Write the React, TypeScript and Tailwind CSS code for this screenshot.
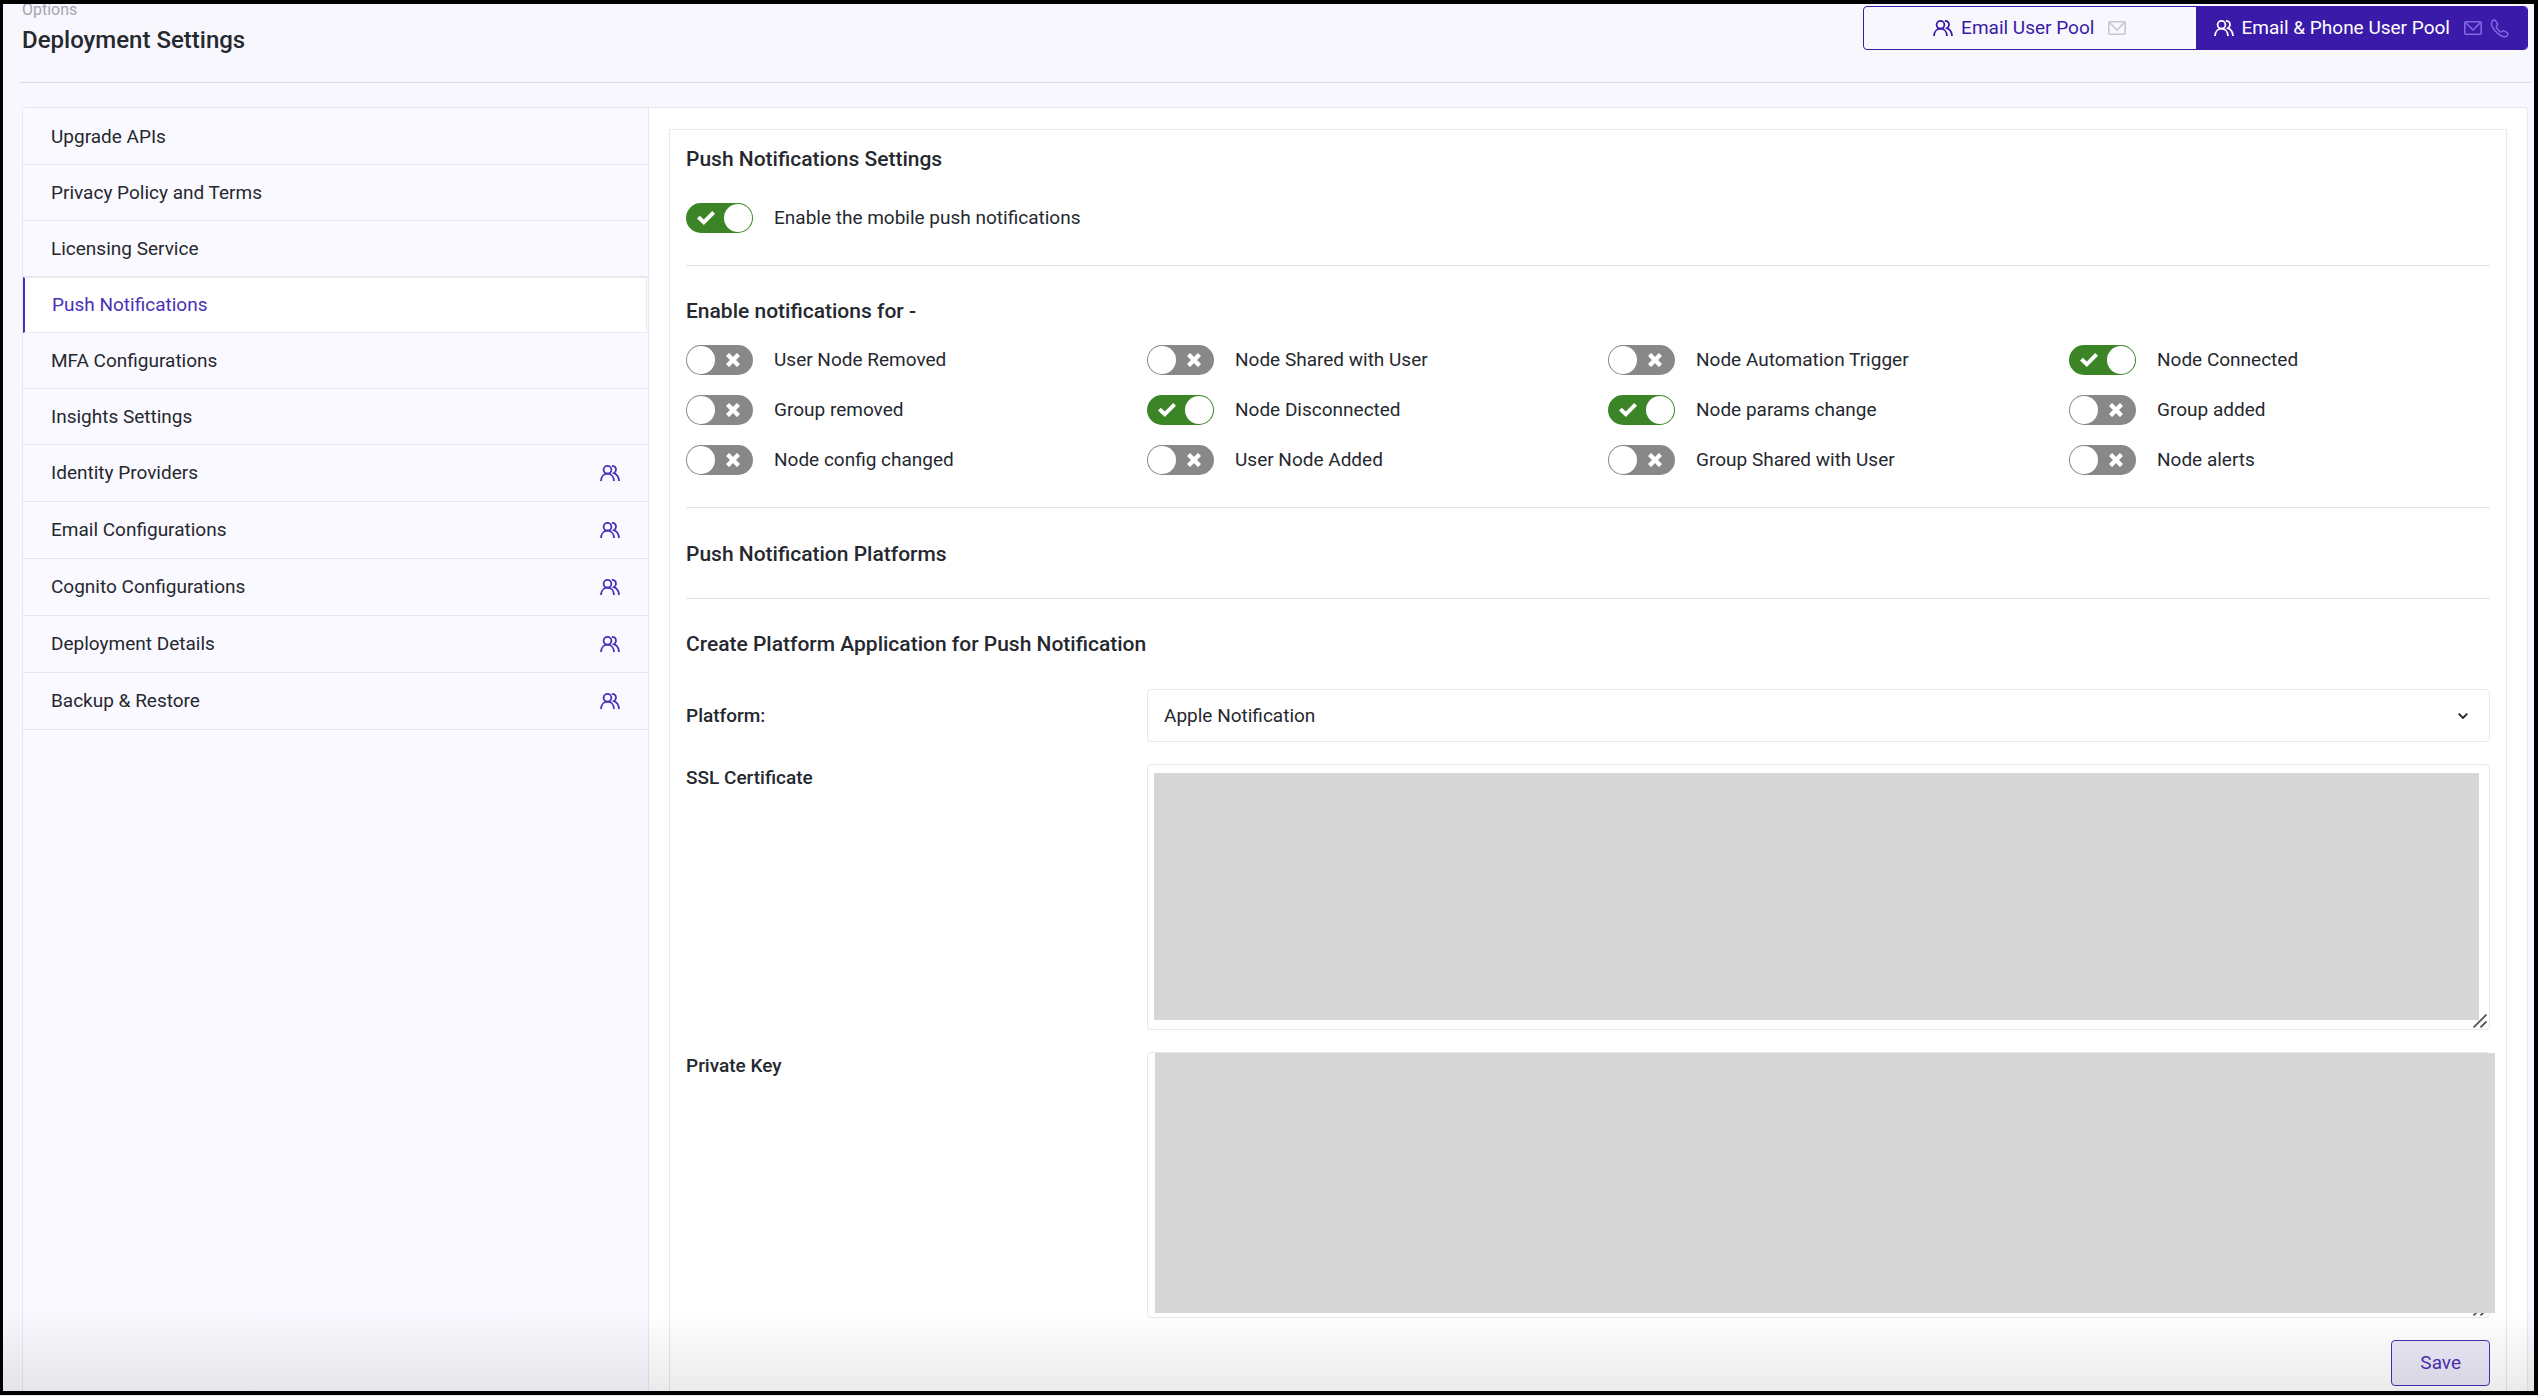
import { useState } from "react"

const menuItems = [
  { label: "Upgrade APIs", pool: false },
  { label: "Privacy Policy and Terms", pool: false },
  { label: "Licensing Service", pool: false },
  { label: "Push Notifications", pool: false },
  { label: "MFA Configurations", pool: false },
  { label: "Insights Settings", pool: false },
  { label: "Identity Providers", pool: true },
  { label: "Email Configurations", pool: true },
  { label: "Cognito Configurations", pool: true },
  { label: "Deployment Details", pool: true },
  { label: "Backup & Restore", pool: true },
]

const notificationTypes = [
  { label: "User Node Removed", on: false },
  { label: "Node Shared with User", on: false },
  { label: "Node Automation Trigger", on: false },
  { label: "Node Connected", on: true },
  { label: "Group removed", on: false },
  { label: "Node Disconnected", on: true },
  { label: "Node params change", on: true },
  { label: "Group added", on: false },
  { label: "Node config changed", on: false },
  { label: "User Node Added", on: false },
  { label: "Group Shared with User", on: false },
  { label: "Node alerts", on: false },
]

function UsersIcon({ className = "" }) {
  return (
    <svg viewBox="0 0 20 16" fill="none" stroke="currentColor" strokeWidth="1.8" className={`h-4 w-5 ${className}`}>
      <circle cx="7.5" cy="4.8" r="3.9" />
      <path d="M1 16c.2-4.300 2.800-7.300 6.500-7.300s6.300 3 6.500 7.300" />
      <path d="M11.800.900c2.600 0 4.200 1.700 4.200 3.900 0 1.500-.800 2.700-2.200 3.400 3.200 1.200 5 3.800 5.200 7.800" />
    </svg>
  )
}

function MailIcon({ className = "" }) {
  return (
    <svg viewBox="0 0 18 14" fill="none" stroke="currentColor" strokeWidth="1.6" strokeLinejoin="round" className={`ml-1.5 h-3.5 w-[18px] ${className}`}>
      <rect x=".8" y=".8" width="16.4" height="12.4" rx="1" />
      <path d="M1.500 1.500 9 9l7.500-7.500" />
    </svg>
  )
}

function PhoneIcon({ className = "" }) {
  return (
    <svg viewBox="0 0 20 20" fill="none" stroke="currentColor" strokeWidth="1.6" strokeLinejoin="round" className={`size-[19px] ${className}`}>
      <path d="M2.500 2.200c1-1.200 2.600-1.400 3.400-.3l1.900 2.900c.5.9.2 1.700-.7 2.500-.8.7-.6 1.400.2 2.600 1 1.500 2 2.600 3.300 3.400 1 .6 1.700.6 2.300-.1.7-.9 1.600-1.100 2.500-.5l2.700 1.900c1 .8.8 2.200-.3 3.200-1.800 1.500-4.500 1-7.600-1.100C6.500 14.200 3.600 10.900 2 7.300 1.200 5.300 1.300 3.600 2.500 2.200z" />
    </svg>
  )
}

function ResizeHandle() {
  return (
    <svg
      viewBox="0 0 14 14"
      className="pointer-events-none absolute right-[3px] bottom-0.5 size-3.5"
      stroke="#555"
      strokeWidth="1.8"
    >
      <path d="M.5 13.500l13-13M7.500 13.500l6-6" />
    </svg>
  )
}

function Toggle({ label, defaultOn }: { label: string; defaultOn: boolean }) {
  const [on, setOn] = useState(defaultOn)

  return (
    <label className="relative flex cursor-pointer items-center gap-[21px]">
      <input
        type="checkbox"
        role="switch"
        className="sr-only"
        checked={on}
        onChange={() => setOn(!on)}
      />
      <span
        className={
          on
            ? "flex h-[30px] w-[67px] shrink-0 items-center justify-between rounded-full bg-[#3c8527] pr-px pl-[11px]"
            : "flex h-[30px] w-[67px] shrink-0 flex-row-reverse items-center justify-between rounded-full bg-[#888888] pr-[13px] pl-px"
        }
      >
        {on ? (
          <svg viewBox="0 0 18 14" className="h-3.5 w-[18px] fill-white">
            <path d="M0 7.500 2.800 4.800 6.800 8.500 15.200 0 18 2.800 6.800 14z" />
          </svg>
        ) : (
          <svg viewBox="0 0 14 14" className="size-3.5" stroke="white" strokeWidth="4.4">
            <path d="M1.500 1.500l11 11M12.500 1.500l-11 11" />
          </svg>
        )}
        <span className="size-7 rounded-full bg-white" />
      </span>
      <span>{label}</span>
    </label>
  )
}

export default function App() {
  const [active, setActive] = useState("Push Notifications")

  return (
    <div className="flex min-h-screen flex-col bg-[#e8e8ec] pb-px font-[Roboto,sans-serif] text-[19px] leading-7 text-[#25282f]">
      <div className="relative flex flex-1 flex-col overflow-hidden border-4 border-l-3 border-black bg-[#f8f7fd]">
        {/* Header */}
        <header className="mr-[3px] ml-4 flex h-[79px] items-start justify-between border-b border-[#dcdce4] px-[3px]">
          <div>
            <p className="-mt-0.5 text-base leading-4 text-[#a5a5ad]">Options</p>
            <h1 className="mt-1 text-2xl leading-9 font-medium">Deployment Settings</h1>
          </div>
          <div className="mt-0.5 flex h-11 w-[665px] overflow-hidden rounded border border-[#3a1aa8]">
            <button className="flex flex-1 items-center justify-center gap-2 text-[#3a1aa8]">
              <UsersIcon />
              Email User Pool
              <MailIcon className="text-[#c8c7ce]" />
            </button>
            <button className="flex flex-1 items-center justify-center gap-2 bg-[#3a1aa8] text-white">
              <UsersIcon />
              Email &amp; Phone User Pool
              <MailIcon className="text-[#8763e6]" />
              <PhoneIcon className="text-[#8763e6]" />
            </button>
          </div>
        </header>

        <div className="mt-6 mr-1.5 ml-[19px] flex flex-1 rounded-t border border-b-0 border-[#e4e8f3] bg-white">
          {/* Side menu */}
          <nav className="w-1/4 border-r border-[#e4e8f3] bg-[#faf9ff] pt-px">
            {menuItems.map((item) => (
              <a
                href="#"
                key={item.label}
                onClick={() => setActive(item.label)}
                className={
                  item.label === active
                    ? "mr-px flex h-14 items-center border border-l-2 border-[#ebebeb] border-l-[#4b2fb8] bg-white px-[27px] text-[#4b2fb8]"
                    : item.pool
                      ? "flex h-[57px] items-center justify-between border-b border-[#e4e8f3] px-7"
                      : "flex h-14 items-center border-b border-[#e4e8f3] px-7"
                }
              >
                {item.label}
                {item.pool && <UsersIcon className="text-[#4b2fb8]" />}
              </a>
            ))}
          </nav>

          {/* Settings panel */}
          <main className="flex flex-1 flex-col px-5 pt-[21px]">
            <div className="flex-1 border border-b-0 border-[#e4e8f3] px-4">
              <section className="border-b border-[#e4e4e6] pt-[15px] pb-8">
                <h2 className="mb-[30px] text-[21px] font-medium">Push Notifications Settings</h2>
                <Toggle label="Enable the mobile push notifications" defaultOn />
              </section>

              <section className="border-b border-[#e4e4e6] pt-[31px] pb-8">
                <h2 className="mb-5 text-[21px] font-medium">Enable notifications for -</h2>
                <div className="grid grid-cols-4 gap-x-10 gap-y-5">
                  {notificationTypes.map((type) => (
                    <Toggle key={type.label} label={type.label} defaultOn={type.on} />
                  ))}
                </div>
              </section>

              <section className="border-b border-[#e4e4e6] pt-8 pb-[30px]">
                <h2 className="text-[21px] font-medium">Push Notification Platforms</h2>
              </section>

              <form className="pt-[31px]" onSubmit={(e) => e.preventDefault()}>
                <h2 className="mb-[31px] text-[21px] font-medium">
                  Create Platform Application for Push Notification
                </h2>
                <div className="grid grid-cols-4 gap-x-10 gap-y-[22px]">
                  <label htmlFor="platform" className="self-center font-medium">
                    Platform:
                  </label>
                  <div className="relative col-span-3">
                    <select
                      id="platform"
                      className="block h-[53px] w-full appearance-none rounded border border-[#e4e8f3] bg-white px-4"
                    >
                      <option>Apple Notification</option>
                      <option>Google Notification</option>
                    </select>
                    <svg
                      viewBox="0 0 10 6"
                      className="pointer-events-none absolute top-6 right-[22px] h-1.5 w-2.5"
                      fill="none"
                      stroke="#222"
                      strokeWidth="1.8"
                    >
                      <path d="M.7.7 5 5 9.300.7" />
                    </svg>
                  </div>

                  <label htmlFor="certificate" className="font-medium">
                    SSL Certificate
                  </label>
                  <div className="relative col-span-3">
                    <textarea
                      id="certificate"
                      className="block h-[266px] w-full resize-none rounded border border-[#e4e8f3] p-4"
                    />
                    <div className="absolute top-[9px] right-[11px] bottom-[10px] left-[7px] bg-[#d6d6d6]" />
                    <ResizeHandle />
                  </div>

                  <label htmlFor="private-key" className="font-medium">
                    Private Key
                  </label>
                  <div className="relative col-span-3">
                    <textarea
                      id="private-key"
                      className="block h-[266px] w-full resize-none rounded border border-[#e4e8f3] p-4"
                    />
                    <ResizeHandle />
                    <div className="absolute top-px -right-[5px] bottom-[5px] left-2 bg-[#d6d6d6]" />
                  </div>
                </div>
                <div className="mt-[22px] flex justify-end pb-1">
                  <button className="h-[46px] rounded border border-[#4b2fb8] bg-[#ebe8f7] px-7 text-[#4b2fb8]">
                    Save
                  </button>
                </div>
              </form>
            </div>
          </main>
        </div>

        {/* Bottom shade */}
        <div className="pointer-events-none absolute inset-x-0 bottom-0 h-20 bg-linear-to-b from-transparent to-black/8" />
      </div>
    </div>
  )
}
